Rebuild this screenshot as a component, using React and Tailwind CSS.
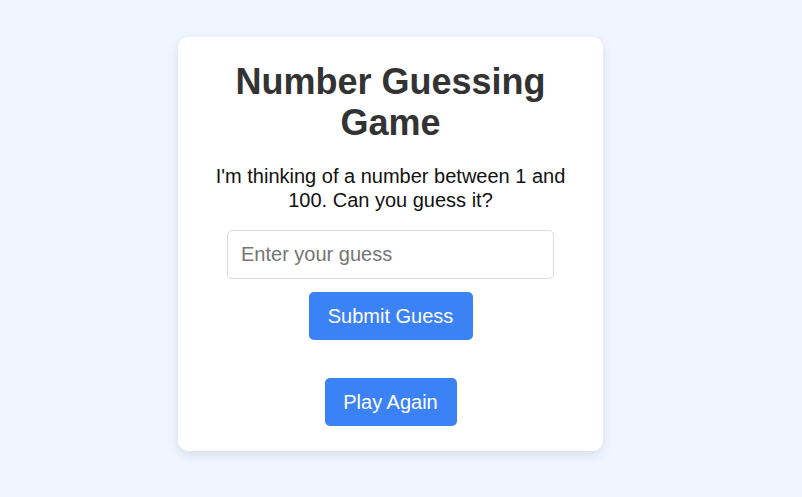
export default function App() {
  return (
    <div className="min-h-screen w-full bg-[#eff6ff] flex justify-center pr-[21px] pt-[37px] font-['Liberation_Sans',Arial,sans-serif]">
      <div className="w-[425px] h-[414px] bg-white rounded-[10px] shadow-[0_4px_12px_rgba(0,0,0,0.1)] px-8 pt-[24px] flex flex-col items-center text-center">
        <h1 className="text-[36px] leading-[41.4px] font-bold text-[#333333]">Number Guessing Game</h1>
        <p className="mt-[20px] text-[20px] leading-[24px] text-[#111111]">
          I'm thinking of a number between 1 and 100. Can you guess it?
        </p>
        <input
          type="text"
          placeholder="Enter your guess"
          className="mt-[18px] w-[327px] h-[49px] px-[13px] border border-[#dddddd] rounded-[5px] text-[20px] text-[#333] placeholder:text-[#757575] outline-none"
        />
        <button className="mt-[13px] w-[164px] h-[48px] bg-[#3b82f6] text-white text-[20px] rounded-[5px]">
          Submit Guess
        </button>
        <button className="mt-[38px] w-[132px] h-[48px] bg-[#3b82f6] text-white text-[20px] rounded-[5px]">
          Play Again
        </button>
      </div>
    </div>
  );
}
